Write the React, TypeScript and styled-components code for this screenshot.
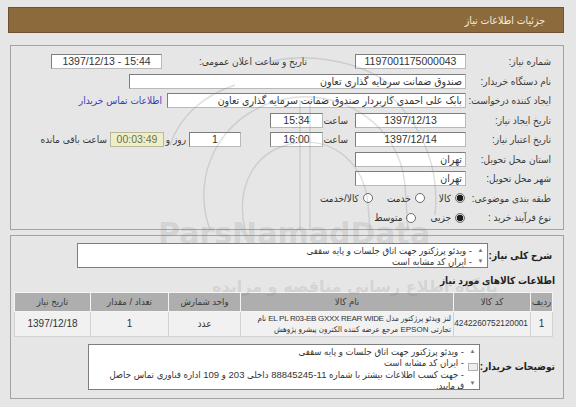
import React from 'react';
import styled, {createGlobalStyle} from 'styled-components';

const GlobalStyle = createGlobalStyle`
    html, body {
        margin: 0;
        padding: 0;
        background-color: #e6e6e6;
    }
    body {
        font-family: "Liberation Sans", "DejaVu Sans Condensed", "DejaVu Sans", sans-serif;
        font-size: 10px;
        color: #333;
        direction: rtl;
        overflow: hidden;
    }
`

const Page = styled.div`
    position: relative;
    padding: 7px 12px 0 8px;
    height: 407px;
    box-sizing: border-box;
    overflow: hidden;
`

const Header = styled.div`
    height: 26px;
    background-color: #8c6a3c;
    border: 1px solid #6f5330;
    box-sizing: border-box;
    color: #f4ece0;
    font-size: 10.5px;
    line-height: 24px;
    padding-right: 18px;
`

const Panel = styled.div<{$top: number, $pt: number, $pb: number}>`
    margin: ${p => p.$top}px 0 0 2px;
    border: 1px solid #a3a3a3;
    padding: ${p => p.$pt}px 0 ${p => p.$pb}px 0;
`

const Row = styled.div`
    display: flex;
    align-items: center;
    height: 19.5px;
    white-space: nowrap;
`

const Label = styled.div<{$w: number, $pr?: number, $bold?: boolean}>`
    flex-shrink: 0;
    width: ${p => p.$w}px;
    box-sizing: border-box;
    padding-right: ${p => p.$pr ?? 12}px;
    text-align: right;
    white-space: nowrap;
    font-weight: ${p => p.$bold ? 'bold' : 'normal'};
    color: ${p => p.$bold ? '#222' : '#3a3a3a'};
    font-size: 10px;
`

const Field = styled.div<{$w: number, $align?: string}>`
    flex-shrink: 0;
    width: ${p => p.$w}px;
    height: 15px;
    box-sizing: border-box;
    border: 1px solid #7d7d7d;
    border-bottom-color: #b9b9b9;
    border-right-color: #b9b9b9;
    background: #fff;
    line-height: 13px;
    font-size: 10.5px;
    padding: 0 3px;
    text-align: ${p => p.$align ?? 'center'};
    color: #333;
    overflow: hidden;
`

const LtrText = styled.span<{$tight?: boolean}>`
    direction: ltr;
    unicode-bidi: embed;
    letter-spacing: ${p => p.$tight ? '-0.3px' : 'normal'};
`

const Timer = styled(Field)`
    background: #eeeec9;
    border-color: #b8b89a;
    color: #6e6e50;
`

const Small = styled.div<{$w?: number, $pr?: number}>`
    flex-shrink: 0;
    width: ${p => p.$w ? p.$w + 'px' : 'auto'};
    box-sizing: border-box;
    padding-right: ${p => p.$pr ?? 0}px;
    color: #3a3a3a;
`

const Link = styled.a`
    margin-right: 5px;
    color: #3b3bb8;
    text-decoration: none;
`

const RadioItem = styled.div`
    display: flex;
    align-items: center;
    gap: 4px;
    margin-left: 14px;
`

const Circle = styled.span<{$on?: boolean}>`
    width: 10px;
    height: 10px;
    border-radius: 50%;
    box-sizing: border-box;
    border: 1px solid #6c6c6c;
    background: ${p => p.$on ? 'radial-gradient(circle, #1d1d1d 0 3px, #d4d4d4 3.5px)' : '#fff'};
`

const TextBox = styled.div<{$w: number, $h: number}>`
    position: relative;
    flex-shrink: 0;
    width: ${p => p.$w}px;
    height: ${p => p.$h}px;
    box-sizing: border-box;
    border: 1px solid #7d7d7d;
    background: #fff;
    padding: 1px 15px 0 2px;
    font-size: 9.5px;
    line-height: 11.5px;
    color: #333;
    white-space: normal;
    overflow: hidden;
`

const Scroll = styled.div`
    position: absolute;
    right: 2px;
    top: 2px;
    bottom: 2px;
    width: 9px;
    display: flex;
    flex-direction: column;
    justify-content: space-between;
    align-items: center;
    color: #777;
    font-size: 6px;
    line-height: 8px;
`

const Thumb = styled.div`
    width: 8px;
    height: 6px;
    border: 1px solid #b0b0b0;
    background: #eee;
`

const BlockRow = styled.div<{$top: number}>`
    display: flex;
    align-items: center;
    margin-top: ${p => p.$top}px;
`

const Title = styled.div`
    margin-top: 6px;
    padding-right: 8px;
    font-weight: bold;
    font-size: 10px;
    color: #222;
    line-height: 13px;
`

const Table = styled.table`
    margin: 5px 10px 0 10px;
    width: 532px;
    border-collapse: collapse;
    font-size: 9.5px;
    table-layout: fixed;
`

const Th = styled.th<{$w: number}>`
    width: ${p => p.$w}px;
    height: 18px;
    padding: 0;
    background: #aeaeae;
    border: 1px solid #f4f4f4;
    font-weight: normal;
    color: #3a3a3a;
    text-align: center;
`

const Td = styled.td<{$align?: string, $fs?: number}>`
    height: 24px;
    padding: 0 2px;
    background: #f1f1f1;
    border: 1px solid #d2d2d2;
    text-align: ${p => p.$align ?? 'center'};
    font-size: ${p => p.$fs ?? 10}px;
    color: #333;
    line-height: 11px;
    white-space: nowrap;
    overflow: hidden;
`

const ButtonRow = styled.div`
    display: flex;
    gap: 13px;
    padding-right: 92px;
    margin-top: 9px;
`

const Btn = styled.div<{$w: number, $bg: string, $bd: string}>`
    width: ${p => p.$w}px;
    height: 22px;
    box-sizing: border-box;
    background: ${p => p.$bg};
    border: 1px solid ${p => p.$bd};
`

const Watermark = styled.div<{$x: number, $y: number, $size: number}>`
    position: absolute;
    left: ${p => p.$x}px;
    top: ${p => p.$y}px;
    font-family: "DejaVu Sans", sans-serif;
    font-size: ${p => p.$size}px;
    line-height: 1;
    font-weight: bold;
    color: rgba(120, 120, 120, 0.18);
    white-space: nowrap;
    pointer-events: none;
`

const Emblem = styled.svg`
    position: absolute;
    left: 150px;
    top: 55px;
    pointer-events: none;
`

function WatermarkEmblem() {
    return (
        <Emblem width="300" height="175" viewBox="0 0 300 175" fill="none" stroke="rgba(140,140,140,0.28)" strokeWidth="1.4">
            <path d="M60 175 C40 120 70 60 130 45 C190 30 250 70 255 130 L258 175" />
            <path d="M95 175 C85 130 105 95 145 88 C185 82 215 110 218 150 L220 175" />
            <path d="M110 10 C150 -5 210 5 240 30" />
            <path d="M20 90 C30 60 55 40 85 30" />
            <path d="M150 45 L150 175" />
            <path d="M160 45 L160 175" />
            <path d="M240 40 C270 70 290 110 285 160" />
        </Emblem>
    )
}

export default function App() {
    return (
        <>
            <GlobalStyle />
            <Page>
                <Header>جزئیات اطلاعات نیاز</Header>

                <Panel $top={12} $pt={6} $pb={1}>
                    <Row>
                        <Label $w={97}>شماره نیاز:</Label>
                        <Field $w={111}>1197001175000043</Field>
                        <Label $w={193} $pr={48}>تاریخ و ساعت اعلان عمومی:</Label>
                        <Field $w={111}><LtrText>1397/12/13 - 15:44</LtrText></Field>
                    </Row>
                    <Row>
                        <Label $w={97}>نام دستگاه خریدار:</Label>
                        <Field $w={337} $align="right">صندوق ضمانت سرمایه گذاری تعاون</Field>
                    </Row>
                    <Row>
                        <Label $w={97}>ایجاد کننده درخواست:</Label>
                        <Field $w={299} $align="right">بابک علی احمدی کاربردار صندوق ضمانت سرمایه گذاری تعاون</Field>
                        <Link href="#">اطلاعات تماس خریدار</Link>
                    </Row>
                    <Row>
                        <Label $w={97}>تاریخ ایجاد نیاز:</Label>
                        <Field $w={111}>1397/12/13</Field>
                        <Small $w={32} $pr={7}>ساعت</Small>
                        <Field $w={53}>15:34</Field>
                    </Row>
                    <Row>
                        <Label $w={97}>تاریخ اعتبار نیاز:</Label>
                        <Field $w={111}>1397/12/14</Field>
                        <Small $w={32} $pr={7}>ساعت</Small>
                        <Field $w={53}>16:00</Field>
                        <Small $w={29} />
                        <Field $w={52}>1</Field>
                        <Small $w={25} $pr={3}>روز و</Small>
                        <Timer $w={54}>00:03:49</Timer>
                        <Small $pr={3}>ساعت باقی مانده</Small>
                    </Row>
                    <Row>
                        <Label $w={97}>استان محل تحویل:</Label>
                        <Field $w={111} $align="right">تهران</Field>
                    </Row>
                    <Row>
                        <Label $w={97}>شهر محل تحویل:</Label>
                        <Field $w={111} $align="right">تهران</Field>
                    </Row>
                    <Row>
                        <Label $w={98}>طبقه بندی موضوعی:</Label>
                        <RadioItem><Circle $on />کالا</RadioItem>
                        <RadioItem><Circle />خدمت</RadioItem>
                        <RadioItem><Circle />کالا/خدمت</RadioItem>
                    </Row>
                    <Row>
                        <Label $w={98}>نوع فرآیند خرید :</Label>
                        <RadioItem><Circle $on />جزیی</RadioItem>
                        <RadioItem><Circle />متوسط</RadioItem>
                    </Row>
                </Panel>

                <Panel $top={5} $pt={7} $pb={8}>
                    <BlockRow $top={0}>
                        <Label $w={75} $pr={11} $bold>شرح کلی نیاز:</Label>
                        <TextBox $w={411} $h={25}>
                            <Scroll><span>▲</span><span>▼</span></Scroll>
                            - ویدئو پرژکتور جهت اتاق جلسات و پایه سقفی<br />
                            - ایران کد مشابه است
                        </TextBox>
                    </BlockRow>

                    <Title>اطلاعات کالاهای مورد نیاز</Title>
                    <Table>
                        <thead>
                            <tr>
                                <Th $w={21}>ردیف</Th>
                                <Th $w={76}>کد کالا</Th>
                                <Th $w={212}>نام کالا</Th>
                                <Th $w={71}>واحد شمارش</Th>
                                <Th $w={77}>تعداد / مقدار</Th>
                                <Th $w={75}>تاریخ نیاز</Th>
                            </tr>
                        </thead>
                        <tbody>
                            <tr>
                                <Td>1</Td>
                                <Td $fs={8.3}>4242260752120001</Td>
                                <Td $align="right" $fs={8}>
                                    لنز ویدئو پرژکتور مدل <LtrText $tight>EL PL R03-EB GXXX REAR WIDE</LtrText> نام<br />
                                    تجارتی <LtrText>EPSON</LtrText> مرجع عرضه کننده الکترون پیشرو پژوهش
                                </Td>
                                <Td>عدد</Td>
                                <Td>1</Td>
                                <Td>1397/12/18</Td>
                            </tr>
                        </tbody>
                    </Table>

                    <BlockRow $top={7}>
                        <Label $w={83} $pr={8} $bold>توضیحات خریدار:</Label>
                        <TextBox $w={392} $h={46}>
                            <Scroll><span>▲</span><Thumb /><span>▼</span></Scroll>
                            - ویدئو پرژکتور جهت اتاق جلسات و پایه سقفی<br />
                            - ایران کد مشابه است<br />
                            - جهت کسب اطلاعات بیشتر با شماره 11-88845245 داخلی 203 و 109 اداره فناوری تماس حاصل فرمایید.
                        </TextBox>
                    </BlockRow>
                </Panel>

                <ButtonRow>
                    <Btn $w={73} $bg="#f1f4f1" $bd="#8a8a8a" />
                    <Btn $w={134} $bg="#eaf5ea" $bd="#8a8a8a" />
                    <Btn $w={37} $bg="#eaf5ea" $bd="#8a8a8a" />
                    <Btn $w={36} $bg="#f7dcdc" $bd="#b88" />
                    <Btn $w={37} $bg="#fbeeee" $bd="#a77" />
                </ButtonRow>

                <WatermarkEmblem />
                <Watermark $x={158} $y={219} $size={30}>ParsNamadData</Watermark>
                <Watermark $x={212} $y={279} $size={16}>پایگاه اطلاع رسانی مناقصه و مزایده</Watermark>
            </Page>
        </>
    )
}
